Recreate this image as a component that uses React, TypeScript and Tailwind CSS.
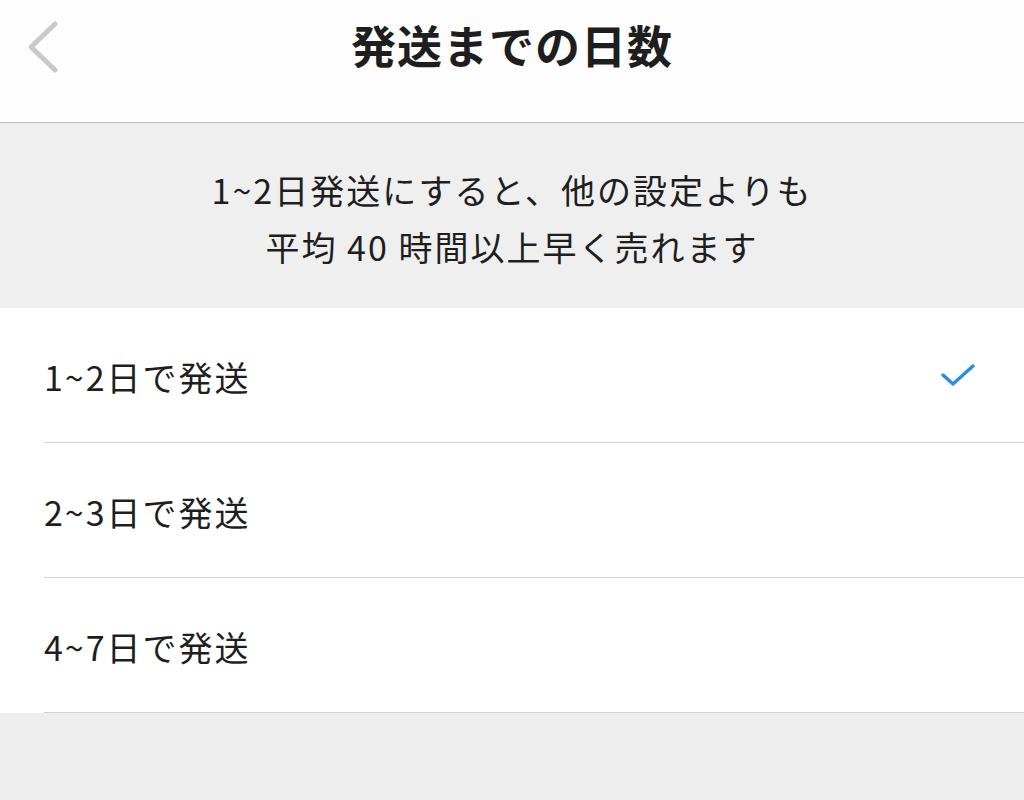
import React from "react";

const font = { fontFamily: '"Noto Sans CJK JP", "Noto Sans", sans-serif' };

const rows = [
  { label: "1~2日で発送", checked: true },
  { label: "2~3日で発送", checked: false },
  { label: "4~7日で発送", checked: false },
];

export default function App() {
  return (
    <div
      className="w-[1024px] h-[800px] bg-[#eeeeee] flex flex-col overflow-hidden"
      style={font}
    >
      <header className="relative h-[123px] shrink-0 bg-[#fdfdfd] border-b border-[#bdbdbd] flex items-start justify-center">
        <div className="absolute left-[25px] top-[20px]">
          <svg width="36" height="54" viewBox="0 0 36 54" fill="none">
            <path
              d="M30 4 L6 27 L30 50"
              stroke="#c9c9c9"
              strokeWidth="5"
              strokeLinecap="round"
              strokeLinejoin="round"
            />
          </svg>
        </div>
        <h1 className="mt-[17px] text-[45px] leading-[56px] font-bold text-[#1e1e1e] tracking-[1px]">
          発送までの日数
        </h1>
      </header>
      <div className="h-[185px] shrink-0 bg-[#efefef] flex flex-col items-center justify-center pt-[4px]">
        <p className="text-[34px] leading-[57px] tracking-[2px] text-[#1e1e1e] text-center">
          1~2日発送にすると、他の設定よりも
          <br />
          平均 40 時間以上早く売れます
        </p>
      </div>
      <ul className="bg-white shrink-0">
        {rows.map((r) => (
          <li key={r.label} className="pl-[44px]">
            <div className="h-[134px] flex items-center justify-between pr-[48px] border-b border-[#d4d4d4] box-content">
              <span className="text-[34px] tracking-[2px] text-[#1e1e1e] pt-[2px]">{r.label}</span>
              {r.checked && (
                <svg width="36" height="28" viewBox="0 0 36 28" fill="none">
                  <path
                    d="M3 14 L13 23 L33 5"
                    stroke="#2f8de0"
                    strokeWidth="3.5"
                    strokeLinecap="round"
                    strokeLinejoin="round"
                  />
                </svg>
              )}
            </div>
          </li>
        ))}
      </ul>
      <div className="flex-1 bg-[#eeeeee]" />
    </div>
  );
}
